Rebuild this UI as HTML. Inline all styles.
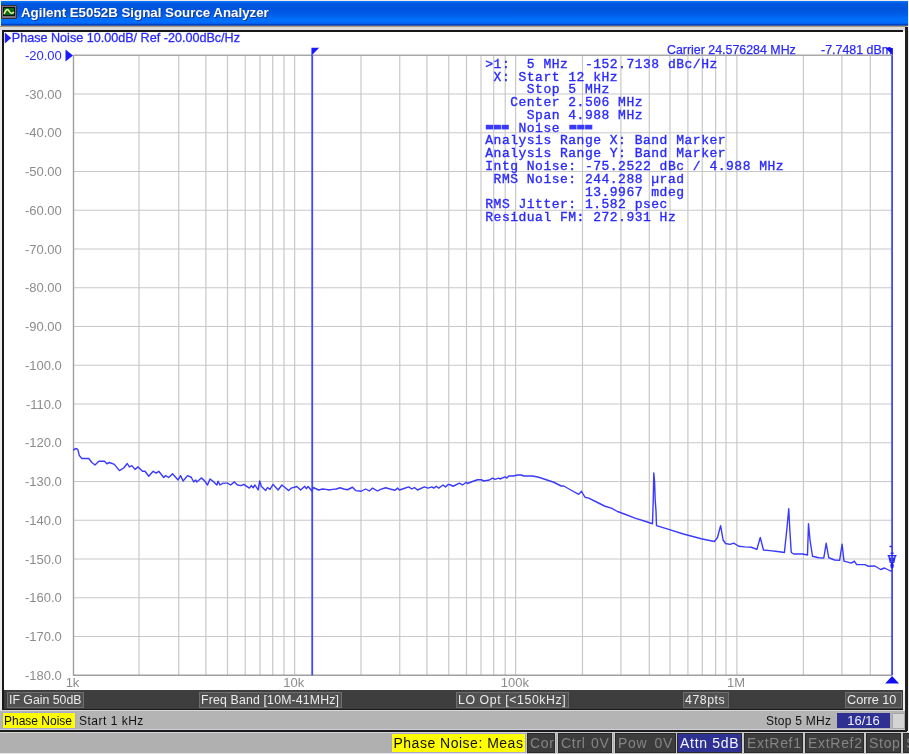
<!DOCTYPE html>
<html><head><meta charset="utf-8"><style>
*{margin:0;padding:0;box-sizing:border-box}
html,body{width:909px;height:754px;overflow:hidden;background:#ececec;font-family:"Liberation Sans",sans-serif}
.abs{position:absolute;will-change:transform}
.dbox,.btn{will-change:transform}
#title{left:1px;top:1px;width:907px;height:24.5px;background:linear-gradient(#0a7af8 0px,#0a6cf0 1px,#0058e0 2.5px,#0054dc 8px,#005be8 13px,#006cf8 17px,#0070ff 21px,#0060f0 22.5px,#0040c4 23.5px,#3a64a8 24.5px)}
#ttxt{left:21px;top:4.7px;font-size:13.3px;font-weight:bold;color:#fff;text-shadow:1px 1px 0 #1a3a90;white-space:pre}
#tan{left:0;top:25.5px;width:907px;height:1px;background:#a89878}
#lg{left:0;top:26.5px;width:907px;height:3px;background:#dcdcdc}
#frame{left:2px;top:29.5px;width:901px;height:680.5px;background:#181818}
#white{left:4px;top:31.5px;width:901px;height:658.5px;background:#fff}
#darkbar{left:4px;top:690px;width:899px;height:18.5px;background:#3e3e3e}
.dbox{position:absolute;top:692px;height:16px;background:#505050;border:1px solid #6e6e6e;color:#ececec;font-size:12.3px;line-height:15px;padding-left:1px;white-space:pre}
#status{left:0;top:710px;width:905px;height:20px;background:#b4b4b4;border-top:1px solid #d8d8d8;border-bottom:1px solid #d0d0d8}
#bline{left:0;top:729.5px;width:907px;height:2px;background:#1c1c1c}
#bottom{left:0;top:731.5px;width:909px;height:22.5px;background:#b0b0b0;border-top:1.5px solid #d4d4d4;border-bottom:2px solid #e4e4e4}
.btn{position:absolute;top:733px;height:19.5px;background:#3c3c3c;border:1px solid #2a2a2a;outline:1px solid #c8c8c8;color:#858585;font-size:14px;letter-spacing:0.7px;line-height:18px;white-space:pre;padding-left:2px}
</style></head><body>
<div class="abs" id="title"></div>
<div class="abs" style="left:1px;top:4.5px;width:15.5px;height:14px;background:#7a7080;border:1px solid #303030;border-radius:1px"></div>
<div class="abs" style="left:2.5px;top:7px;width:12px;height:9px;background:#0a6a10;border:1px solid #101010"></div>
<svg class="abs" style="left:0;top:0" width="20" height="25"><path d="M4,14 Q7,7 9,11 T14,12" stroke="#e8f0a0" stroke-width="1.6" fill="none"/></svg>
<div class="abs" id="ttxt">Agilent E5052B Signal Source Analyzer</div>
<div class="abs" id="tan"></div>
<div class="abs" id="lg"></div>
<div class="abs" id="frame"></div>
<div class="abs" id="white"></div>
<svg class="abs" style="left:0;top:0;font-family:'Liberation Sans',sans-serif" width="909" height="754">
<line x1="139.00" y1="55.25" x2="139.00" y2="675.25" stroke="#c8c8c8" stroke-width="1.2"/>
<line x1="178.70" y1="55.25" x2="178.70" y2="675.25" stroke="#c8c8c8" stroke-width="1.2"/>
<line x1="205.90" y1="55.25" x2="205.90" y2="675.25" stroke="#c8c8c8" stroke-width="1.2"/>
<line x1="227.50" y1="55.25" x2="227.50" y2="675.25" stroke="#c8c8c8" stroke-width="1.2"/>
<line x1="245.25" y1="55.25" x2="245.25" y2="675.25" stroke="#c8c8c8" stroke-width="1.2"/>
<line x1="260.00" y1="55.25" x2="260.00" y2="675.25" stroke="#c8c8c8" stroke-width="1.2"/>
<line x1="272.70" y1="55.25" x2="272.70" y2="675.25" stroke="#c8c8c8" stroke-width="1.2"/>
<line x1="284.00" y1="55.25" x2="284.00" y2="675.25" stroke="#c8c8c8" stroke-width="1.2"/>
<line x1="294.65" y1="55.25" x2="294.65" y2="675.25" stroke="#c8c8c8" stroke-width="1.2"/>
<line x1="361.00" y1="55.25" x2="361.00" y2="675.25" stroke="#c8c8c8" stroke-width="1.2"/>
<line x1="399.75" y1="55.25" x2="399.75" y2="675.25" stroke="#c8c8c8" stroke-width="1.2"/>
<line x1="426.90" y1="55.25" x2="426.90" y2="675.25" stroke="#c8c8c8" stroke-width="1.2"/>
<line x1="448.75" y1="55.25" x2="448.75" y2="675.25" stroke="#c8c8c8" stroke-width="1.2"/>
<line x1="466.50" y1="55.25" x2="466.50" y2="675.25" stroke="#c8c8c8" stroke-width="1.2"/>
<line x1="481.00" y1="55.25" x2="481.00" y2="675.25" stroke="#c8c8c8" stroke-width="1.2"/>
<line x1="493.70" y1="55.25" x2="493.70" y2="675.25" stroke="#c8c8c8" stroke-width="1.2"/>
<line x1="505.20" y1="55.25" x2="505.20" y2="675.25" stroke="#c8c8c8" stroke-width="1.2"/>
<line x1="515.60" y1="55.25" x2="515.60" y2="675.25" stroke="#c8c8c8" stroke-width="1.2"/>
<line x1="582.50" y1="55.25" x2="582.50" y2="675.25" stroke="#c8c8c8" stroke-width="1.2"/>
<line x1="620.90" y1="55.25" x2="620.90" y2="675.25" stroke="#c8c8c8" stroke-width="1.2"/>
<line x1="649.30" y1="55.25" x2="649.30" y2="675.25" stroke="#c8c8c8" stroke-width="1.2"/>
<line x1="670.00" y1="55.25" x2="670.00" y2="675.25" stroke="#c8c8c8" stroke-width="1.2"/>
<line x1="687.90" y1="55.25" x2="687.90" y2="675.25" stroke="#c8c8c8" stroke-width="1.2"/>
<line x1="702.25" y1="55.25" x2="702.25" y2="675.25" stroke="#c8c8c8" stroke-width="1.2"/>
<line x1="715.60" y1="55.25" x2="715.60" y2="675.25" stroke="#c8c8c8" stroke-width="1.2"/>
<line x1="726.00" y1="55.25" x2="726.00" y2="675.25" stroke="#c8c8c8" stroke-width="1.2"/>
<line x1="736.90" y1="55.25" x2="736.90" y2="675.25" stroke="#c8c8c8" stroke-width="1.2"/>
<line x1="803.40" y1="55.25" x2="803.40" y2="675.25" stroke="#c8c8c8" stroke-width="1.2"/>
<line x1="841.90" y1="55.25" x2="841.90" y2="675.25" stroke="#c8c8c8" stroke-width="1.2"/>
<line x1="870.25" y1="55.25" x2="870.25" y2="675.25" stroke="#c8c8c8" stroke-width="1.2"/>
<line x1="73.5" y1="94.00" x2="892.1" y2="94.00" stroke="#c8c8c8" stroke-width="1.2"/>
<line x1="73.5" y1="132.75" x2="892.1" y2="132.75" stroke="#c8c8c8" stroke-width="1.2"/>
<line x1="73.5" y1="171.50" x2="892.1" y2="171.50" stroke="#c8c8c8" stroke-width="1.2"/>
<line x1="73.5" y1="210.25" x2="892.1" y2="210.25" stroke="#c8c8c8" stroke-width="1.2"/>
<line x1="73.5" y1="249.00" x2="892.1" y2="249.00" stroke="#c8c8c8" stroke-width="1.2"/>
<line x1="73.5" y1="287.75" x2="892.1" y2="287.75" stroke="#c8c8c8" stroke-width="1.2"/>
<line x1="73.5" y1="326.50" x2="892.1" y2="326.50" stroke="#c8c8c8" stroke-width="1.2"/>
<line x1="73.5" y1="365.25" x2="892.1" y2="365.25" stroke="#c8c8c8" stroke-width="1.2"/>
<line x1="73.5" y1="404.00" x2="892.1" y2="404.00" stroke="#c8c8c8" stroke-width="1.2"/>
<line x1="73.5" y1="442.75" x2="892.1" y2="442.75" stroke="#c8c8c8" stroke-width="1.2"/>
<line x1="73.5" y1="481.50" x2="892.1" y2="481.50" stroke="#c8c8c8" stroke-width="1.2"/>
<line x1="73.5" y1="520.25" x2="892.1" y2="520.25" stroke="#c8c8c8" stroke-width="1.2"/>
<line x1="73.5" y1="559.00" x2="892.1" y2="559.00" stroke="#c8c8c8" stroke-width="1.2"/>
<line x1="73.5" y1="597.75" x2="892.1" y2="597.75" stroke="#c8c8c8" stroke-width="1.2"/>
<line x1="73.5" y1="636.50" x2="892.1" y2="636.50" stroke="#c8c8c8" stroke-width="1.2"/>
<polyline points="73.5,55.25 892.1,55.25" stroke="#a8a8a8" stroke-width="1.4" fill="none"/>
<polyline points="73.5,55.25 73.5,675.25 892.1,675.25" stroke="#a0a0a0" stroke-width="1.4" fill="none"/>
<text x="61.8" y="59.85" text-anchor="end" fill="#2a2aff" font-size="13">-20.00</text>
<text x="61.8" y="98.60" text-anchor="end" fill="#8c8c8c" font-size="13">-30.00</text>
<text x="61.8" y="137.35" text-anchor="end" fill="#8c8c8c" font-size="13">-40.00</text>
<text x="61.8" y="176.10" text-anchor="end" fill="#8c8c8c" font-size="13">-50.00</text>
<text x="61.8" y="214.85" text-anchor="end" fill="#8c8c8c" font-size="13">-60.00</text>
<text x="61.8" y="253.60" text-anchor="end" fill="#8c8c8c" font-size="13">-70.00</text>
<text x="61.8" y="292.35" text-anchor="end" fill="#8c8c8c" font-size="13">-80.00</text>
<text x="61.8" y="331.10" text-anchor="end" fill="#8c8c8c" font-size="13">-90.00</text>
<text x="61.8" y="369.85" text-anchor="end" fill="#8c8c8c" font-size="13">-100.0</text>
<text x="61.8" y="408.60" text-anchor="end" fill="#8c8c8c" font-size="13">-110.0</text>
<text x="61.8" y="447.35" text-anchor="end" fill="#8c8c8c" font-size="13">-120.0</text>
<text x="61.8" y="486.10" text-anchor="end" fill="#8c8c8c" font-size="13">-130.0</text>
<text x="61.8" y="524.85" text-anchor="end" fill="#8c8c8c" font-size="13">-140.0</text>
<text x="61.8" y="563.60" text-anchor="end" fill="#8c8c8c" font-size="13">-150.0</text>
<text x="61.8" y="602.35" text-anchor="end" fill="#8c8c8c" font-size="13">-160.0</text>
<text x="61.8" y="641.10" text-anchor="end" fill="#8c8c8c" font-size="13">-170.0</text>
<text x="61.8" y="679.85" text-anchor="end" fill="#8c8c8c" font-size="13">-180.0</text>
<text x="72.5" y="687.4" text-anchor="middle" fill="#8c8c8c" font-size="13">1k</text>
<text x="293.7" y="687.4" text-anchor="middle" fill="#8c8c8c" font-size="13">10k</text>
<text x="514.9" y="687.4" text-anchor="middle" fill="#8c8c8c" font-size="13">100k</text>
<text x="736.1" y="687.4" text-anchor="middle" fill="#8c8c8c" font-size="13">1M</text>
<path d="M4.8,32.5 L11.2,38 L4.8,43.5 Z" fill="#1a1aff"/>
<text x="11.8" y="42.2" fill="#2a2aff" stroke="#2a2aff" stroke-width="0.3" font-size="12.6">Phase Noise 10.00dB/ Ref -20.00dBc/Hz</text>
<path d="M65.5,49.5 L73,55.5 L65.5,61.5 Z" fill="#1a1aff"/>
<text x="667" y="53.7" fill="#2a2aff" stroke="#2a2aff" stroke-width="0.25" font-size="12.4">Carrier 24.576284 MHz</text>
<text x="892" y="53.7" text-anchor="end" fill="#2a2aff" stroke="#2a2aff" stroke-width="0.25" font-size="12.4">-7.7481 dBm</text>
<line x1="312.21" y1="55.25" x2="312.21" y2="675.25" stroke="#4646ff" stroke-width="1.8"/>
<path d="M311.41,47.8 L319.21,47.8 L311.41,55.8 Z" fill="#1a1aff"/>
<line x1="892.1" y1="55.25" x2="892.1" y2="675.25" stroke="#4646ff" stroke-width="1.8"/>
<path d="M892.90,48 L885.60,48 L892.90,55.5 Z" fill="#1010f0"/>
<path d="M885.10,683.5 L899.10,683.5 L892.1,676 Z" fill="#1010f0"/>
<polyline points="73.10,450.00 76.25,448.50 77.75,449.40 79.40,455.60 81.90,458.50 88.75,458.50 91.90,462.50 95.00,465.00 98.75,461.25 104.40,461.25 106.90,463.75 109.40,462.50 114.40,464.40 119.40,470.60 123.75,468.00 127.25,463.50 129.40,466.90 131.90,465.60 135.00,469.40 138.10,466.90 142.50,471.25 145.00,471.25 148.75,476.25 153.10,471.25 156.25,473.10 158.75,471.25 163.75,477.50 165.60,475.60 168.75,477.50 172.50,473.75 178.10,480.00 180.60,475.60 183.10,481.00 187.50,475.60 191.25,477.25 193.75,482.00 195.60,480.00 196.90,482.00 201.25,477.90 204.40,480.60 207.50,485.00 210.00,479.00 213.75,481.90 216.90,485.00 218.10,481.25 220.00,485.00 223.10,483.10 227.50,483.10 230.60,485.00 234.40,481.90 237.50,485.00 241.25,485.60 243.75,484.40 249.40,488.10 251.25,485.60 253.10,487.75 255.00,485.00 258.10,490.00 259.75,481.00 261.25,486.25 265.60,490.60 267.50,487.50 270.00,489.40 273.10,484.40 278.10,490.00 281.90,485.00 285.00,487.50 288.75,490.60 291.25,488.10 296.90,486.50 300.60,490.00 304.75,486.25 306.25,488.75 308.10,486.50 311.90,491.00 313.10,487.50 318.75,490.00 322.50,489.00 326.25,489.40 328.75,490.00 332.50,489.40 336.25,489.00 340.00,487.75 343.75,489.00 347.50,489.75 352.50,487.25 355.60,490.60 361.25,491.25 365.60,489.00 369.40,491.00 372.50,488.10 377.50,491.00 380.60,489.40 385.60,487.75 390.00,489.00 395.00,490.25 397.50,488.10 399.40,490.00 402.50,489.00 408.75,486.90 411.90,489.00 414.40,487.50 417.50,490.00 424.40,486.90 428.10,488.10 431.90,486.90 433.75,488.10 436.25,486.25 438.75,488.10 443.10,485.00 445.60,486.90 448.10,484.40 450.00,484.75 453.10,486.25 459.40,483.10 462.50,485.00 466.25,482.25 467.50,483.50 472.50,481.50 477.50,479.75 481.25,479.75 483.75,481.00 489.40,480.00 492.50,478.10 495.00,479.40 498.75,478.10 500.00,479.00 505.00,476.90 506.90,478.10 508.75,476.00 513.60,476.00 517.50,475.00 521.25,475.00 523.75,476.00 532.50,476.00 538.75,477.25 546.25,479.75 553.75,482.25 561.25,486.00 563.75,486.00 571.25,490.25 578.75,494.40 581.50,491.25 585.00,497.25 588.75,498.10 597.50,502.50 605.00,506.25 611.25,508.10 617.50,511.50 623.60,513.75 635.00,518.10 645.00,521.25 652.50,523.75 653.30,498.00 653.80,473.00 654.60,482.00 655.20,500.00 656.00,511.00 656.50,525.60 668.75,529.40 682.50,533.75 701.25,538.75 714.40,541.50 717.50,537.50 720.60,525.60 723.10,540.00 725.60,543.50 730.00,544.40 733.75,543.10 738.75,546.25 745.00,546.90 751.25,547.25 756.90,549.40 760.25,537.50 763.50,550.00 770.00,550.60 777.50,551.50 784.40,552.50 786.90,528.75 788.75,508.75 789.75,528.75 791.25,552.50 793.75,554.00 802.50,554.00 807.50,555.00 808.50,523.75 810.00,540.00 812.50,556.25 818.75,557.75 823.75,558.10 826.20,543.30 828.75,557.75 834.70,560.00 839.60,560.35 842.10,544.20 844.00,561.10 851.30,563.10 854.30,561.10 856.70,564.60 865.00,564.60 868.00,566.20 874.80,566.00 880.70,569.50 884.60,568.00 890.50,571.00 892.30,570.40" stroke="#3a3aff" stroke-width="1.4" fill="none" stroke-linejoin="round"/>
<path d="M887.6,555.6 L896.6,555.6 M888.8,555.6 L890.3,562.2 L893.8,562.2 L895.3,555.6 M890.6,553.2 L893.6,553.2 M889.5,546.5 L892,546.5 M890.6,557.5 L891,561 M893.3,557.5 L893,561" stroke="#2a2aff" stroke-width="1.4" fill="none"/>
<ellipse cx="892.1" cy="565.6" rx="1.7" ry="2.8" fill="#1a1aff"/>
<text x="485.3" y="67.80" fill="#2a2aff" stroke="#2a2aff" stroke-width="0.35" font-family="Liberation Mono" font-size="13" letter-spacing="0.5">>1:&#160;&#160;5&#160;MHz&#160;&#160;-152.7138&#160;dBc/Hz</text>
<text x="485.3" y="80.58" fill="#2a2aff" stroke="#2a2aff" stroke-width="0.35" font-family="Liberation Mono" font-size="13" letter-spacing="0.5">&#160;X:&#160;Start&#160;12&#160;kHz</text>
<text x="485.3" y="93.36" fill="#2a2aff" stroke="#2a2aff" stroke-width="0.35" font-family="Liberation Mono" font-size="13" letter-spacing="0.5">&#160;&#160;&#160;&#160;&#160;Stop&#160;5&#160;MHz</text>
<text x="485.3" y="106.14" fill="#2a2aff" stroke="#2a2aff" stroke-width="0.35" font-family="Liberation Mono" font-size="13" letter-spacing="0.5">&#160;&#160;&#160;Center&#160;2.506&#160;MHz</text>
<text x="485.3" y="118.92" fill="#2a2aff" stroke="#2a2aff" stroke-width="0.35" font-family="Liberation Mono" font-size="13" letter-spacing="0.5">&#160;&#160;&#160;&#160;&#160;Span&#160;4.988&#160;MHz</text>
<text x="485.3" y="131.70" fill="#2a2aff" stroke="#2a2aff" stroke-width="0.35" font-family="Liberation Mono" font-size="13" letter-spacing="0.5">&#160;&#160;&#160;&#160;Noise</text>
<text x="485.3" y="144.48" fill="#2a2aff" stroke="#2a2aff" stroke-width="0.35" font-family="Liberation Mono" font-size="13" letter-spacing="0.5">Analysis&#160;Range&#160;X:&#160;Band&#160;Marker</text>
<text x="485.3" y="157.26" fill="#2a2aff" stroke="#2a2aff" stroke-width="0.35" font-family="Liberation Mono" font-size="13" letter-spacing="0.5">Analysis&#160;Range&#160;Y:&#160;Band&#160;Marker</text>
<text x="485.3" y="170.04" fill="#2a2aff" stroke="#2a2aff" stroke-width="0.35" font-family="Liberation Mono" font-size="13" letter-spacing="0.5">Intg&#160;Noise:&#160;-75.2522&#160;dBc&#160;/&#160;4.988&#160;MHz</text>
<text x="485.3" y="182.82" fill="#2a2aff" stroke="#2a2aff" stroke-width="0.35" font-family="Liberation Mono" font-size="13" letter-spacing="0.5">&#160;RMS&#160;Noise:&#160;244.288&#160;µrad</text>
<text x="485.3" y="195.60" fill="#2a2aff" stroke="#2a2aff" stroke-width="0.35" font-family="Liberation Mono" font-size="13" letter-spacing="0.5">&#160;&#160;&#160;&#160;&#160;&#160;&#160;&#160;&#160;&#160;&#160;&#160;13.9967&#160;mdeg</text>
<text x="485.3" y="208.38" fill="#2a2aff" stroke="#2a2aff" stroke-width="0.35" font-family="Liberation Mono" font-size="13" letter-spacing="0.5">RMS&#160;Jitter:&#160;1.582&#160;psec</text>
<text x="485.3" y="221.16" fill="#2a2aff" stroke="#2a2aff" stroke-width="0.35" font-family="Liberation Mono" font-size="13" letter-spacing="0.5">Residual&#160;FM:&#160;272.931&#160;Hz</text>
<rect x="485.80" y="124.8" width="7.2" height="4.6" fill="#3a3aff"/>
<rect x="493.70" y="124.8" width="7.2" height="4.6" fill="#3a3aff"/>
<rect x="501.60" y="124.8" width="7.2" height="4.6" fill="#3a3aff"/>
<rect x="569.30" y="124.8" width="7.2" height="4.6" fill="#3a3aff"/>
<rect x="577.20" y="124.8" width="7.2" height="4.6" fill="#3a3aff"/>
<rect x="585.10" y="124.8" width="7.2" height="4.6" fill="#3a3aff"/>
</svg>
<div class="abs" id="darkbar"></div>
<div class="dbox" style="left:6.5px;width:77px">IF Gain 50dB</div>
<div class="dbox" style="left:198.5px;width:143px;letter-spacing:0.17px">Freq Band [10M-41MHz]</div>
<div class="dbox" style="left:455.5px;width:113px;letter-spacing:0.6px">LO Opt [&lt;150kHz]</div>
<div class="dbox" style="left:683px;width:46px;letter-spacing:0.55px">478pts</div>
<div class="dbox" style="left:844.5px;width:57px;font-size:12.7px">Corre 10</div>
<div class="abs" id="status"></div>
<div class="abs" style="left:1.5px;top:712px;width:74px;height:16.5px;background:#ffff00;border:1px solid #a8a8d0;font-size:12px;line-height:17px;color:#111;padding-left:1px;white-space:pre">Phase Noise</div>
<div class="abs" style="left:79px;top:714px;font-size:12px;letter-spacing:0.5px;line-height:15px;color:#111;white-space:pre">Start 1 kHz</div>
<div class="abs" style="left:765.5px;top:714px;font-size:12px;letter-spacing:0.25px;line-height:15px;color:#111;white-space:pre">Stop 5 MHz</div>
<div class="abs" style="left:837px;top:713px;width:53px;height:14.5px;background:#2e3192;color:#f0f0ff;font-size:13px;line-height:16px;text-align:center;white-space:pre">16/16</div>
<div class="abs" style="left:891.5px;top:712.5px;width:12.5px;height:15.5px;background:#d4d4d4;border:1px solid #a8a8a8"></div>
<div class="abs" style="left:905px;top:27px;width:2.6px;height:704px;background:#202020"></div>
<div class="abs" id="bline"></div>
<div class="abs" id="bottom"></div>
<div class="abs" style="left:390.5px;top:733px;width:135px;height:19.5px;background:#ffff00;border:1px solid #a8a8d0;font-size:14px;letter-spacing:0.5px;line-height:18px;color:#111;padding-left:1.5px;white-space:pre">Phase Noise: Meas</div>
<div class="btn" style="left:527px;width:28px">Cor</div>
<div class="btn" style="left:558px;width:54px">Ctrl<span style="position:absolute;right:1.5px">0V</span></div>
<div class="btn" style="left:614.5px;width:60.5px">Pow<span style="position:absolute;right:1.5px">0V</span></div>
<div class="btn" style="left:677px;width:65px;background:#2e3192;color:#f4f4ff">Attn 5dB</div>
<div class="btn" style="left:744px;width:58.5px">ExtRef1</div>
<div class="btn" style="left:804.5px;width:58.5px">ExtRef2</div>
<div class="btn" style="left:865.5px;width:34.5px">Stop</div>
<div class="btn" style="left:902.5px;width:10px">S</div>
</body></html>
